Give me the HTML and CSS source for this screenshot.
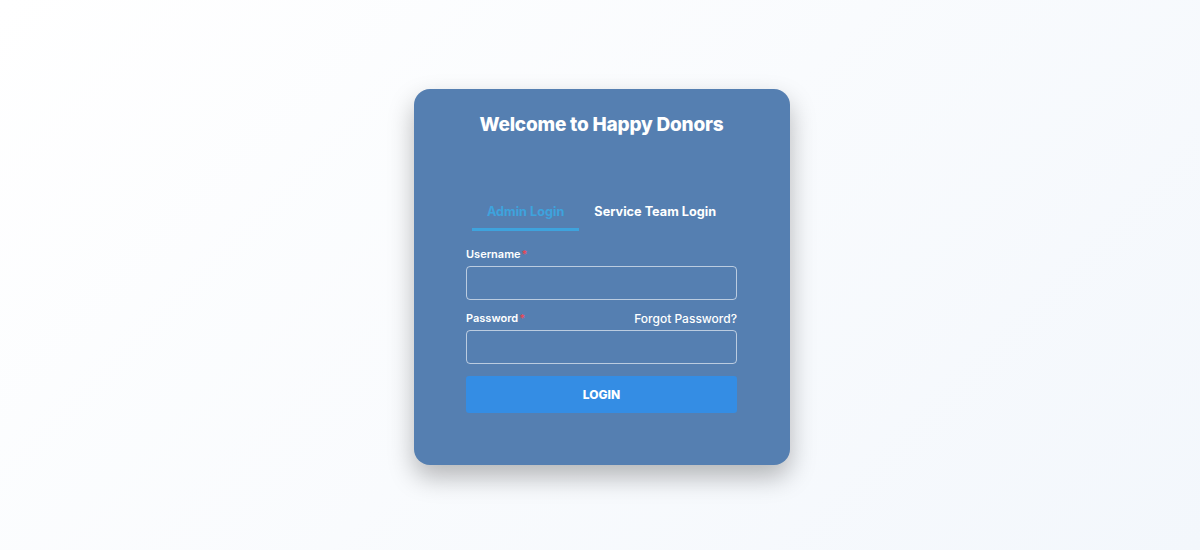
FILE: index.html
```html
<!DOCTYPE html>
<html lang="en">

<head>
    <meta charset="UTF-8">
    <meta name="viewport" content="width=device-width, initial-scale=1.0">
    <title>Happy Donors - Login</title>
    <link rel="stylesheet" href="styles.css">
</head>

<body>
    <div class="page">
        <div class="login-card">
            <h1 class="title">Welcome to Happy Donors</h1>

            <div class="tabs">
                <div class="tab active">Admin Login</div>
                <div class="tab">Service Team Login</div>
            </div>

            <form class="login-form">
                <div class="label-row">
                    <label for="username">Username<span class="req">*</span></label>
                </div>
                <input type="text" id="username" name="username">

                <div class="label-row">
                    <label for="password">Password<span class="req">*</span></label>
                    <a href="#" class="forgot">Forgot Password?</a>
                </div>
                <input type="password" id="password" name="password">

                <button type="button" class="login-btn">LOGIN</button>
            </form>
        </div>
    </div>
</body>

</html>
```

FILE: styles.css
```css
* {
    box-sizing: border-box;
}

html,
body {
    margin: 0;
    height: 100%;
}

body {
    font-family: Inter, "Open Sans", sans-serif;
    background: linear-gradient(135deg, #ffffff 0%, #f3f7fc 100%);
}

.page {
    height: 100%;
    display: flex;
    justify-content: center;
    padding: 89px 0 0 4px;
}

.login-card {
    width: 376px;
    height: 376px;
    background-color: #557fb1;
    border-radius: 16px;
    padding: 24px 53px 0 52px;
    box-shadow: 0 12px 26px rgba(0, 0, 0, 0.28);
    color: #fff;
}

.title {
    margin: 0;
    text-align: center;
    font-size: 19px;
    font-weight: 800;
    letter-spacing: -0.2px;
    line-height: 24px;
}

.tabs {
    display: flex;
    justify-content: center;
    margin-top: 61px;
}

.tab {
    padding: 6px 15px 8px;
    font-size: 12.7px;
    font-weight: 700;
    line-height: 16px;
    border-bottom: 3px solid transparent;
}

.tab.active {
    color: #3ea3dd;
    border-bottom-color: #3ea3dd;
}

.login-form {
    display: flex;
    flex-direction: column;
    margin-top: 15px;
}

.label-row {
    display: flex;
    justify-content: space-between;
    align-items: center;
    height: 16px;
    margin-bottom: 4px;
}

.label-row label {
    font-size: 11px;
    font-weight: 600;
}

.req {
    color: #e84855;
    margin-left: 1px;
}

.forgot {
    color: #fff;
    text-decoration: none;
    font-size: 12px;
    font-weight: 500;
}

.login-form input {
    height: 34px;
    background: transparent;
    border: 1px solid rgba(255, 255, 255, 0.6);
    border-radius: 4px;
    margin-bottom: 10px;
    color: #fff;
    padding: 0 10px;
}

.login-btn {
    height: 37px;
    margin-top: 2px;
    background-color: #348de4;
    border: none;
    border-radius: 3px;
    color: #fff;
    font-family: inherit;
    font-size: 12px;
    font-weight: 800;
}
```
